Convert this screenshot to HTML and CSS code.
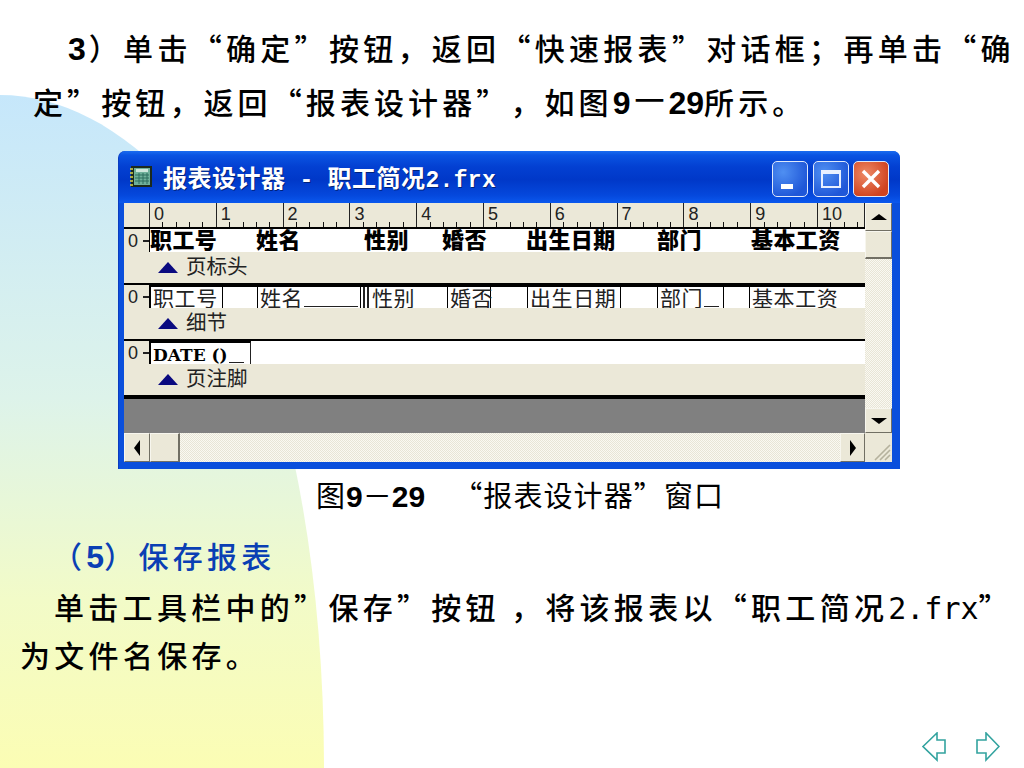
FILE: index.html
```html
<!DOCTYPE html>
<html lang="zh-CN">
<head>
<meta charset="utf-8">
<title>报表设计器</title>
<link rel="stylesheet" href="styles.css">
</head>
<body>
<main class="slide">
  <svg class="backdrop" width="1024" height="768" viewBox="0 0 1024 768">
    <defs>
      <linearGradient id="blob" x1="0" y1="0" x2="0" y2="1">
        <stop offset="0" stop-color="#c6e7fb"/>
        <stop offset="0.45" stop-color="#ddf3ea"/>
        <stop offset="0.75" stop-color="#f2fbc8"/>
        <stop offset="1" stop-color="#fbfdb4"/>
      </linearGradient>
    </defs>
    <path d="M0 95 C60 95 120 125 180 190 C270 295 324 520 324 768 L0 768 Z" fill="url(#blob)"/>
  </svg>

  <p class="line line-a"><b class="latin lead">3</b>）单击“确定”按钮，返回“快速报表”对话框；再单击“确</p>
  <p class="line line-b">定”按钮，返回“报表设计器”，如图<b class="latin">9</b><span class="dash">－</span><b class="latin">29</b>所示。</p>

  <section class="window">
    <header class="titlebar">
      <svg class="app-icon" width="22" height="22" viewBox="0 0 22 22">
        <rect x="1" y="0" width="21" height="21" fill="#1c2a1c"/>
        <rect x="4" y="2" width="16" height="17" fill="#6fb09a"/>
        <rect x="6" y="3" width="12" height="3" fill="#cfe6dc"/>
        <path d="M5 9h14M5 12h14M5 15h14M9 7v11M13 7v11M17 7v11" stroke="#2f6f5e" stroke-width="1"/>
        <path d="M0 3h3M0 7h3M0 11h3M0 15h3M0 19h3" stroke="#d8d24a" stroke-width="1.4"/>
      </svg>
      <h1 class="title">报表设计器 <span class="mono">-</span> 职工简况<span class="mono">2.frx</span></h1>
      <div class="caption-buttons">
        <span class="cap cap-min"><i></i></span>
        <span class="cap cap-max"><i></i></span>
        <span class="cap cap-close">
          <svg width="24" height="24" viewBox="0 0 24 24"><path d="M4 4L20 20M20 4L4 20" stroke="#fff" stroke-width="3.4"/></svg>
        </span>
      </div>
    </header>

    <div class="client">
      <div class="main-col">
        <div class="ruler">
          <span class="ruler-corner"></span>
          <span class="inch">0</span><span class="inch">1</span><span class="inch">2</span><span class="inch">3</span><span class="inch">4</span><span class="inch">5</span><span class="inch">6</span><span class="inch">7</span><span class="inch">8</span><span class="inch">9</span><span class="inch inch-last">10</span>
        </div>

        <div class="band">
          <span class="gutter">0</span>
          <div class="fields heads">
            <span>职工号</span><span>姓名</span><span>性别</span><span>婚否</span><span>出生日期</span><span>部门</span><span>基本工资</span>
          </div>
        </div>
        <div class="band-label"><span class="tri"></span>页标头</div>

        <div class="band">
          <span class="gutter">0</span>
          <div class="cells">
            <span class="cell c1">职工号</span><span class="cell c2">姓名</span><span class="cell c3">性别</span><span class="cell c4">婚否</span><span class="cell c5">出生日期</span><span class="cell c6">部门</span><span class="cell c7">基本工资</span>
          </div>
        </div>
        <div class="band-label"><span class="tri"></span>细节</div>

        <div class="band">
          <span class="gutter">0</span>
          <div class="date-field">DATE ()</div>
        </div>
        <div class="band-label band-label-last"><span class="tri"></span>页注脚</div>

        <div class="canvas-gray"></div>
      </div>

      <aside class="vscroll">
        <span class="sbtn sbtn-up"><i class="arrow up"></i></span>
        <span class="sthumb-v"></span>
        <span class="strack"></span>
        <span class="sbtn sbtn-down"><i class="arrow down"></i></span>
      </aside>

      <div class="hscroll">
        <span class="sbtn sbtn-left"><i class="arrow left"></i></span>
        <span class="sthumb-h"></span>
        <span class="strack"></span>
        <span class="sbtn sbtn-right"><i class="arrow right"></i></span>
      </div>
      <div class="grip">
        <svg width="27" height="29" viewBox="0 0 27 29"><path d="M25 12L10 27M25 17L15 27M25 22L20 27" stroke="#b5b29d" stroke-width="1.6"/></svg>
      </div>
    </div>
  </section>

  <p class="fig-caption">图<b class="latin-cap">9</b><span class="dash-cap">－</span><b class="latin-cap">29</b><span class="fig-gap"></span>“报表设计器”窗口</p>

  <h2 class="section-title">（<b class="latin-blue">5</b>）保存报表</h2>
  <p class="line line-c">单击工具栏中的”保存”按钮 ，将该报表以“职工简况<span class="mono-body">2.frx</span>”</p>
  <p class="line line-d">为文件名保存。</p>

  <nav class="nav-arrows">
    <svg width="24" height="30" viewBox="0 0 24 30"><path d="M1 14.5L15 1V8H23V21H15V28Z" fill="none" stroke="#33a39f" stroke-width="1.6"/></svg>
    <svg width="24" height="30" viewBox="0 0 24 30"><path d="M23 14.5L10 1V8H1V21H10V28Z" fill="none" stroke="#33a39f" stroke-width="1.6"/></svg>
  </nav>
</main>
</body>
</html>
```
FILE: styles.css
```css
* { box-sizing: border-box; }
html, body { margin: 0; padding: 0; background: #fff; }
body { font-family: "Noto Sans CJK SC", "Liberation Sans", sans-serif; color: #000; text-spacing-trim: space-all; }
.slide { position: relative; width: 1024px; height: 768px; overflow: hidden; display: flex; flex-direction: column; }
.backdrop { position: absolute; left: 0; top: 0; }
.slide > p, .slide > section, .slide > h2, .slide > nav { position: relative; }

.line { margin: 0; font-size: 30px; line-height: 34px; font-weight: 500; letter-spacing: 4.3px; white-space: nowrap; }
.latin { font-family: "Liberation Sans", sans-serif; font-size: 32px; font-weight: 700; letter-spacing: 0; }
.lead { margin-right: 3px; }
.dash { font-weight: 400; font-size: 38px; letter-spacing: 0; }
.line-a { margin-top: 30px; padding-left: 68px; }
.line-b { margin-top: 15px; padding-left: 33px; letter-spacing: 4.1px; }
.line-c { margin-top: 15px; padding-left: 54px; }
.line-d { margin-top: 11px; padding-left: 20px; }
.mono-body { font-family: "DejaVu Sans Mono", monospace; font-size: 30px; letter-spacing: 0; }

.window { margin: 31px 0 0 118px; width: 782px; height: 318px; flex: none; background: #0a4fdc; border-radius: 7px 7px 0 0; display: flex; flex-direction: column; padding: 0 8px 7px 5px; border-left: 1px solid #0a3cc0; }
.titlebar { height: 52px; flex: none; margin: 0 -8px 0 -5px; padding: 0 11px 0 11px; display: flex; align-items: center; border-radius: 7px 7px 0 0; background: linear-gradient(#1a6cf0 0, #0a54e2 8%, #0340d2 30%, #0038c8 55%, #0548dc 85%, #0a58ee 100%); }
.app-icon { flex: none; }
.title { margin: 4px 0 0 11px; font-size: 24px; line-height: 28px; font-weight: 700; color: #fff; letter-spacing: 0.5px; word-spacing: 8px; white-space: nowrap; text-shadow: 1px 1px 0 #00227a; }
.mono { font-family: "Liberation Mono", monospace; letter-spacing: 0.3px; font-size: 23px; }
.caption-buttons { margin-left: auto; display: flex; gap: 4.5px; margin-top: 4px; }
.cap { width: 36px; height: 36px; border: 1.5px solid #dfe9fb; border-radius: 5px; background: radial-gradient(circle at 30% 30%, #4f8ff2, #1f57d8 75%); position: relative; display: flex; align-items: center; justify-content: center; }
.cap-min i { position: absolute; left: 8px; bottom: 7px; width: 12px; height: 5px; background: #fff; }
.cap-max i { width: 20px; height: 18px; border: 2px solid #e8f0ff; border-top-width: 4px; }
.cap-close { background: radial-gradient(circle at 35% 35%, #ee8a66, #d0431f 75%); }

.client { flex: 1; display: grid; grid-template-columns: 741px 27px; grid-template-rows: 230px 29px; background: #ebe8d8; min-height: 0; }
.main-col { display: flex; flex-direction: column; min-width: 0; background: #ebe8d8; }

.ruler { height: 26px; display: flex; border-bottom: 2px solid #000; flex: none; background-color: #ebe8d8; background-image: repeating-linear-gradient(90deg, #111 0 1px, transparent 1px 13.36px); background-position: 25px 100%; background-size: 716px 5px; background-repeat: no-repeat; }
.ruler-corner { width: 25px; flex: none; }
.inch { width: 66.8px; flex: none; height: 24px; border-left: 1.5px solid #222; font: 18px/23px "Liberation Sans", sans-serif; color: #222; padding-left: 4px; }
.inch-last { width: 48px; border-right: 1.5px solid #222; }

.band { height: 23px; flex: none; display: flex; background: #fff; }
.gutter { width: 25px; flex: none; background: #ebe8d8; font: 18px/25px "Liberation Sans", sans-serif; color: #222; padding-left: 4px; position: relative; }
.gutter::after { content: ""; position: absolute; right: 0; top: 11px; width: 6px; height: 1.5px; background: #222; }

.fields { flex: 1; display: grid; grid-template-columns: 106px 108px 78px 84px 131px 94px 1fr; font-size: 22px; line-height: 18px; height: 23px; white-space: nowrap; }
.heads { font-weight: 900; border-left: 1px solid #000; letter-spacing: 0.4px; }

.cells { flex: 1; display: flex; border-top: 2px solid #000; font-size: 21px; line-height: 20px; letter-spacing: 0.6px; color: #222; white-space: nowrap; background: #fff; }
.cell { flex: none; border-left: 1.5px solid #000; height: 21px; padding-left: 2px; }
.c1 { width: 74px; border-left-width: 2px; border-right: 1.5px solid #000; }
.c2 { width: 104px; margin-left: 34px; border-right: 1.5px solid #000; background: linear-gradient(#222, #222) no-repeat 46px 19px / 54px 1px; }
.c3 { width: 50px; margin-left: 2px; border-left: 6px double #222; padding-left: 3px; }
.c4 { width: 44px; margin-left: 34px; border-right: 1.5px solid #000; }
.c5 { width: 94px; margin-left: 36px; border-right: 1.5px solid #000; }
.c6 { width: 67px; margin-left: 36px; border-right: 1.5px solid #000; background: linear-gradient(#222, #222) no-repeat 46px 19px / 15px 1px; }
.c7 { width: 86px; margin-left: 25px; }

.date-field { width: 102px; height: 23px; border-top: 2px solid #000; border-left: 2px solid #000; border-right: 1.5px solid #222; font: 700 17px/25px "DejaVu Serif", serif; padding-left: 2px; white-space: nowrap; background: #fff linear-gradient(#222, #222) no-repeat 78px 19px / 15px 1px; overflow: hidden; }

.band-label { height: 33px; flex: none; display: flex; align-items: flex-start; padding-left: 34px; font-size: 20.5px; line-height: 26px; color: #222; border-bottom: 2px solid #000; background: #ebe8d8; }
.band-label-last { height: 35px; border-bottom: 4px solid #000; }
.tri { width: 0; height: 0; border-left: 10px solid transparent; border-right: 10px solid transparent; border-bottom: 11px solid #0a0a80; margin: 10px 8px 0 0; }

.canvas-gray { flex: 1; background: #808080; }

.vscroll { display: flex; flex-direction: column; background: #ebe8d8; }
.strack { flex: 1; background: #f4f2e8 repeating-conic-gradient(#e8e5d6 0 25%, #faf9f2 0 50%) 0 0 / 2px 2px; }
.sbtn, .sthumb-v, .sthumb-h { flex: none; display: flex; align-items: center; justify-content: center; background: #ebe8d8; border: 1px solid #f7f6ee; border-right-color: #716f64; border-bottom-color: #716f64; }
.sbtn-up { height: 28px; }
.sthumb-v { height: 28px; border-bottom-width: 2px; }
.sbtn-down { height: 25px; }
.hscroll { display: flex; }
.sbtn-left { width: 26px; }
.sthumb-h { width: 30px; border-right-width: 2px; }
.sbtn-right { width: 25px; }
.grip { background: #ebe8d8; }
.arrow { width: 0; height: 0; display: block; }
.arrow.up { border: 8px solid transparent; border-top: 0; border-bottom: 6px solid #000; }
.arrow.down { border: 8px solid transparent; border-bottom: 0; border-top: 6px solid #000; }
.arrow.left { border: 8px solid transparent; border-left: 0; border-right: 6px solid #000; }
.arrow.right { border: 8px solid transparent; border-right: 0; border-left: 6px solid #000; }

.fig-caption { margin: 7px 0 0 316px; font-size: 29px; line-height: 36px; letter-spacing: 1.1px; white-space: nowrap; font-weight: 400; }
.latin-cap { font-family: "Liberation Sans", sans-serif; font-size: 30px; font-weight: 700; letter-spacing: 0; }
.dash-cap { letter-spacing: 0; }
.fig-gap { display: inline-block; width: 28px; }

.section-title { margin: 23px 0 0 52px; font-size: 30px; line-height: 34px; font-weight: 500; letter-spacing: 4.3px; color: #0a3fb4; white-space: nowrap; }
.latin-blue { font-family: "Liberation Sans", sans-serif; font-size: 32px; font-weight: 700; letter-spacing: 0; }

.nav-arrows { margin: auto 24px 6px auto; display: flex; gap: 30px; }
```
